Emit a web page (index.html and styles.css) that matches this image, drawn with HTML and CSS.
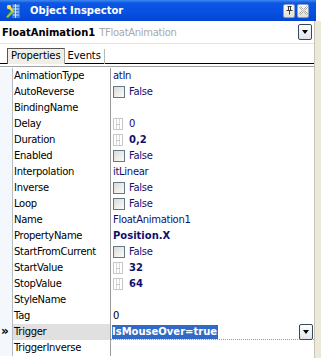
FILE: index.html
```html
<!DOCTYPE html>
<html lang="en">
<head>
    <meta charset="UTF-8">
    <title>Object Inspector</title>
    <link rel="stylesheet" href="styles.css">
</head>
<body>
<div id="inspector">
    <div class="caption">
        <svg class="app-icon" width="16" height="16" viewBox="0 0 16 16">
            <rect x="7" y="1" width="8" height="14" fill="#3a7bd5"/>
            <path d="M8 3h6M8 6h6M8 9h6M8 12h6M10.5 1v14" stroke="#cfe4ff" stroke-width="1"/>
            <path d="M1 14 L7 7 L9 9 L3 15 Z" fill="#8cc63f"/>
            <path d="M4 4 L8 8" stroke="#f3d23a" stroke-width="2.5"/>
            <circle cx="4" cy="4" r="2.2" fill="#f7e15a"/>
        </svg>
        <span class="caption-title">Object Inspector</span>
        <span class="caption-btn">
            <svg width="9" height="9" viewBox="0 0 9 9">
                <path d="M2.5 0.5h4M3.5 0.5v4M5.5 0.5v4M1.5 4.5h6M4.5 4.5v4" stroke="#3b3b3b" stroke-width="1" fill="none"/>
            </svg>
        </span>
        <span class="caption-btn">
            <svg width="9" height="9" viewBox="0 0 9 9">
                <path d="M0.5 1.5l1-1 3 3 3-3 1 1-3 3 3 3-1 1-3-3-3 3-1-1 3-3z" stroke="#9a9a9a" stroke-width="0.8" fill="none"/>
            </svg>
        </span>
    </div>
    <div class="body">
        <div class="panel">
            <div class="combo">
                <span class="combo-name">FloatAnimation1</span>
                <span class="combo-type">TFloatAnimation</span>
                <span class="drop-btn"><span class="arrow"></span></span>
            </div>
            <div class="tabs">
                <span class="tab tab-active">Properties</span>
                <span class="tab">Events</span>
            </div>
            <div class="grid">
                <div class="row"><span class="gutter"></span><span class="name">AnimationType</span><span class="value">atIn</span></div>
                <div class="row"><span class="gutter"></span><span class="name">AutoReverse</span><span class="value"><span class="check"></span>False</span></div>
                <div class="row"><span class="gutter"></span><span class="name">BindingName</span><span class="value"></span></div>
                <div class="row"><span class="gutter"></span><span class="name">Delay</span><span class="value"><span class="spin"></span>0</span></div>
                <div class="row"><span class="gutter"></span><span class="name">Duration</span><span class="value bold"><span class="spin"></span>0,2</span></div>
                <div class="row"><span class="gutter"></span><span class="name">Enabled</span><span class="value"><span class="check"></span>False</span></div>
                <div class="row"><span class="gutter"></span><span class="name">Interpolation</span><span class="value">itLinear</span></div>
                <div class="row"><span class="gutter"></span><span class="name">Inverse</span><span class="value"><span class="check"></span>False</span></div>
                <div class="row"><span class="gutter"></span><span class="name">Loop</span><span class="value"><span class="check"></span>False</span></div>
                <div class="row"><span class="gutter"></span><span class="name">Name</span><span class="value">FloatAnimation1</span></div>
                <div class="row"><span class="gutter"></span><span class="name">PropertyName</span><span class="value bold">Position.X</span></div>
                <div class="row"><span class="gutter"></span><span class="name">StartFromCurrent</span><span class="value"><span class="check"></span>False</span></div>
                <div class="row"><span class="gutter"></span><span class="name">StartValue</span><span class="value bold"><span class="spin"></span>32</span></div>
                <div class="row"><span class="gutter"></span><span class="name">StopValue</span><span class="value bold"><span class="spin"></span>64</span></div>
                <div class="row"><span class="gutter"></span><span class="name">StyleName</span><span class="value"></span></div>
                <div class="row"><span class="gutter"></span><span class="name">Tag</span><span class="value plain">0</span></div>
                <div class="row row-current"><span class="gutter">&raquo;</span><span class="name">Trigger</span><span class="value editor"><span class="selection">IsMouseOver=true</span><span class="drop-btn"><span class="arrow"></span></span></span></div>
                <div class="row"><span class="gutter"></span><span class="name">TriggerInverse</span><span class="value"></span></div>
            </div>
        </div>
        <div class="edge"></div>
    </div>
</div>
</body>
</html>
```

FILE: styles.css
```css
* {
    padding: 0;
    margin: 0;
    box-sizing: border-box;
}

body {
    width: 321px;
    height: 358px;
    overflow: hidden;
    background: #ffffff;
    font-family: "DejaVu Sans", sans-serif;
    font-size: 10px;
    letter-spacing: -0.3px;
    color: #000000;
}

#inspector {
    display: flex;
    flex-direction: column;
    height: 358px;
}

.caption {
    height: 21px;
    width: 316px;
    display: flex;
    align-items: center;
    padding-left: 5px;
    padding-right: 7px;
    background: linear-gradient(#3f8af2 0, #0c56e4 3px, #0650e2 60%, #0445d2 100%);
}

.app-icon {
    flex: none;
}

.caption-title {
    margin-left: 9px;
    flex: 1;
    font-weight: bold;
    letter-spacing: 0;
    color: #ffffff;
}

.caption-btn {
    width: 12px;
    height: 14px;
    margin-left: 2px;
    display: flex;
    align-items: center;
    justify-content: center;
    border: 1px solid #8aa0c8;
    border-radius: 2px;
    background: linear-gradient(#fbfaf5, #e4e0d0);
}

.body {
    flex: 1;
    display: flex;
}

.panel {
    width: 314px;
    display: flex;
    flex-direction: column;
}

.edge {
    flex: 1;
    border-left: 1px solid #c9c5b6;
    background: #ece9d8;
}

.combo {
    height: 23px;
    display: flex;
    align-items: center;
    padding-left: 2px;
    padding-right: 2px;
    border-bottom: 1px solid #e4e2da;
}

.combo-name {
    font-weight: bold;
    letter-spacing: 0;
}

.combo-type {
    margin-left: 4px;
    flex: 1;
    color: #a8a8a8;
}

.drop-btn {
    width: 14px;
    height: 16px;
    display: flex;
    align-items: center;
    justify-content: center;
    border: 1px solid #34495e;
    border-radius: 2px;
    background: linear-gradient(#ffffff, #dfe3ea);
}

.arrow {
    width: 0;
    height: 0;
    border-left: 3.5px solid transparent;
    border-right: 3.5px solid transparent;
    border-top: 4px solid #000000;
}

.tabs {
    height: 20px;
    display: flex;
    align-items: flex-end;
    padding-left: 7px;
    border-bottom: 1px solid #000000;
}

.tab {
    height: 15px;
    line-height: 13px;
    padding: 0 3px;
    margin-bottom: -1px;
    border-right: 1px solid #b8b8b8;
    letter-spacing: -0.1px;
}

.tab-active {
    height: 16px;
    background: #f1efe5;
    border: 1px solid #555555;
    border-bottom: none;
    border-right-color: #a0a0a0;
}

.grid {
    margin-top: 2px;
    padding-top: 1px;
    border-top: 1px solid #a0a0a0;
}

.row {
    height: 16px;
    display: flex;
    line-height: 16px;
}

.gutter {
    width: 13px;
    flex: none;
    border-right: 1px solid #b8bcc4;
    background: #f4f7fb;
    font-size: 12px;
    font-weight: bold;
    line-height: 14px;
    padding-left: 1px;
}

.name {
    width: 98px;
    flex: none;
    padding-left: 1px;
    border-right: 1px solid #9a9a9a;
}

.value {
    flex: 1;
    display: flex;
    align-items: center;
    padding-left: 2px;
    color: #10106c;
}

.value.plain {
    color: #000000;
}

.bold {
    font-weight: bold;
    letter-spacing: 0;
}

.check {
    width: 12px;
    height: 12px;
    margin-right: 4px;
    border: 1px solid #667789;
    background: linear-gradient(135deg, #dcdcd6, #fbfbf9);
}

.spin {
    width: 10px;
    height: 12px;
    margin-right: 6px;
    border: 1px solid #c8c8c8;
    background:
        linear-gradient(#c8c8c8, #c8c8c8) 50% 50% / 4px 1px no-repeat,
        linear-gradient(to right, transparent 2px, #d8d8d8 2px, #d8d8d8 3px, transparent 3px, transparent 5px, #d8d8d8 5px, #d8d8d8 6px, transparent 6px);
}

.row-current .name {
    background: #e0e0e0;
}

.editor {
    padding-left: 1px;
    padding-right: 1px;
    border-bottom: 1px dotted #9a9a9a;
}

.selection {
    line-height: 14px;
    margin-right: auto;
    padding-right: 1px;
    font-weight: bold;
    letter-spacing: 0;
    color: #ffffff;
    background: #316ac5;
}
```
